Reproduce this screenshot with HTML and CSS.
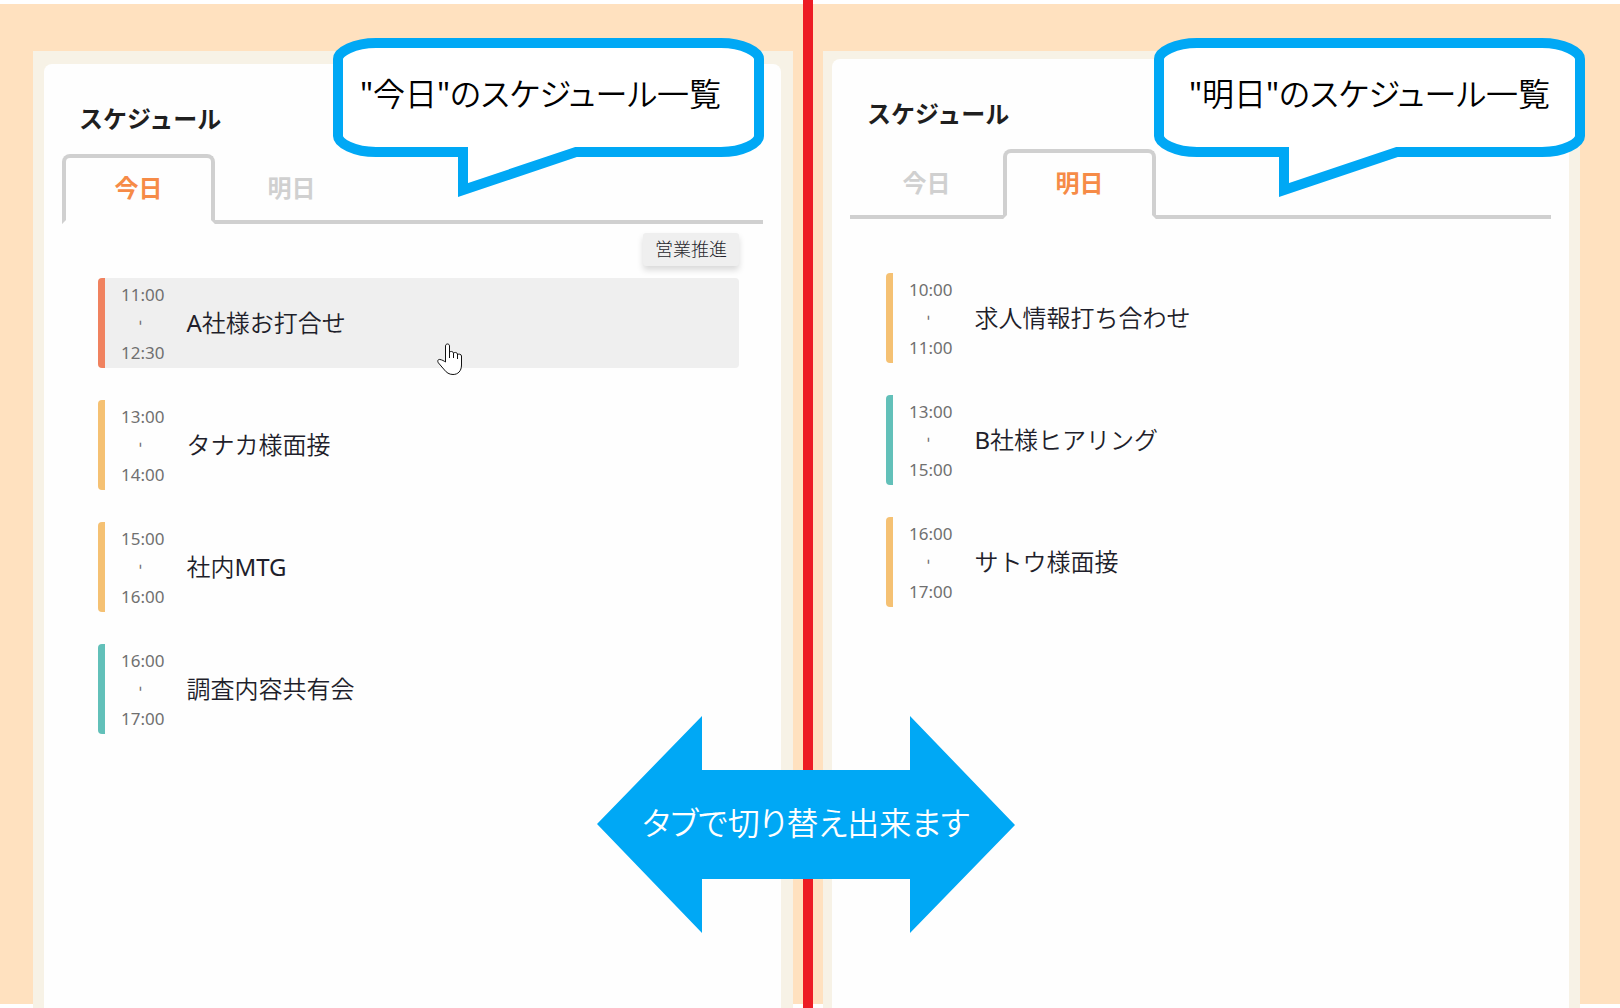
FILE: index.html
```html
<!DOCTYPE html>
<html lang="ja">
<head>
  <meta charset="UTF-8">
  <meta name="viewport" content="width=device-width, initial-scale=1.0">
  <title>スケジュール</title>
  <link rel="stylesheet" href="styles.css">
</head>
<body>
  <main class="page">
    <section class="side side-today">
      <div class="frame">
        <div class="card">
          <h2>スケジュール</h2>
          <div class="tabs" role="tablist">
            <button type="button" class="tab active" role="tab" aria-selected="true">今日</button>
            <button type="button" class="tab" role="tab" aria-selected="false">明日</button>
          </div>
          <ul class="events">
            <li class="event red hover">
              <div class="time"><time>11:00</time><span class="dash">-</span><time>12:30</time></div>
              <p>A社様お打合せ</p>
              <span class="tag">営業推進</span>
              <svg class="cursor" width="26" height="33" viewBox="0 0 26 33" aria-hidden="true">
                <path d="M8.5 19V3C8.500 0.300 12.500 0.300 12.500 3V15V9.500C13 8 16 8 16.500 10V15V10.500C17 9 20 9 20.500 11V16V12C21 10.500 24.500 11 24.500 13V22C24.500 28 21 31.500 16 31.500C12 31.500 9.500 29.500 7.500 27L1.500 20C0 18 1 16 3 16.500C5 16.800 7 18 8.500 19Z"/>
              </svg>
            </li>
            <li class="event yellow">
              <div class="time"><time>13:00</time><span class="dash">-</span><time>14:00</time></div>
              <p>タナカ様面接</p>
            </li>
            <li class="event yellow">
              <div class="time"><time>15:00</time><span class="dash">-</span><time>16:00</time></div>
              <p>社内MTG</p>
            </li>
            <li class="event green">
              <div class="time"><time>16:00</time><span class="dash">-</span><time>17:00</time></div>
              <p>調査内容共有会</p>
            </li>
          </ul>
        </div>
      </div>
      <div class="callout">
        <svg width="431" height="160" viewBox="0 0 431 160" aria-hidden="true">
          <path d="M43 5H388C410 5 426 14 426 21V98C426 105 410 114 388 114H243L130 152V114H43C21 114 5 105 5 98V21C5 14 21 5 43 5Z"/>
        </svg>
        <p>"今日"のスケジュール一覧</p>
      </div>
    </section>

    <div class="divider">
      <div class="arrow">
        <svg width="418" height="217" viewBox="0 0 418 217" aria-hidden="true">
          <path d="M0 108L105 0V54H313V0L418 109L313 217V163H105V217Z"/>
        </svg>
        <p>タブで切り替え出来ます</p>
      </div>
    </div>

    <section class="side side-tomorrow">
      <div class="frame">
        <div class="card">
          <h2>スケジュール</h2>
          <div class="tabs" role="tablist">
            <button type="button" class="tab" role="tab" aria-selected="false">今日</button>
            <button type="button" class="tab active" role="tab" aria-selected="true">明日</button>
          </div>
          <ul class="events">
            <li class="event yellow">
              <div class="time"><time>10:00</time><span class="dash">-</span><time>11:00</time></div>
              <p>求人情報打ち合わせ</p>
            </li>
            <li class="event green">
              <div class="time"><time>13:00</time><span class="dash">-</span><time>15:00</time></div>
              <p>B社様ヒアリング</p>
            </li>
            <li class="event yellow">
              <div class="time"><time>16:00</time><span class="dash">-</span><time>17:00</time></div>
              <p>サトウ様面接</p>
            </li>
          </ul>
        </div>
      </div>
      <div class="callout">
        <svg width="431" height="160" viewBox="0 0 431 160" aria-hidden="true">
          <path d="M43 5H388C410 5 426 14 426 21V98C426 105 410 114 388 114H243L130 152V114H43C21 114 5 105 5 98V21C5 14 21 5 43 5Z"/>
        </svg>
        <p>"明日"のスケジュール一覧</p>
      </div>
    </section>
  </main>
</body>
</html>
```
FILE: styles.css
```css
* { box-sizing: border-box; }
body { margin: 0; background: #fff; color: #1f1f2b; font-family: "Noto Sans", "Noto Sans CJK JP", sans-serif; }
h2, p, ul { margin: 0; padding: 0; }
svg { display: block; }

.page {
  display: grid;
  grid-template-columns: 803fr 10px 807fr;
  min-height: 100vh;
  background: linear-gradient(#ffe1bf, #ffe1bf) no-repeat 0 4px / 100% calc(100% - 8px);
}

/* panels */
.side { position: relative; display: flex; padding-top: 51px; }
.side-today { padding-left: 33px; padding-right: 10px; }
.side-tomorrow { padding-left: 10px; padding-right: 40px; }
.frame { flex: 1; display: flex; background: #f7f2e6; }
.side-today .frame { padding: 13px 12px 0 11px; }
.side-tomorrow .frame { padding: 8px 11px 0 9px; }
.card { flex: 1; padding: 36px 18px 0; background: #fefefe; border-radius: 8px 8px 0 0; }
.card h2 { padding-left: 17px; font-size: 24px; line-height: 38px; font-weight: 700; color: #1f1f1f; }

/* tabs */
.tabs { display: flex; margin-top: 16px; border-bottom: 4px solid #d0d0d0; }
.tab {
  width: 153px;
  height: 70px;
  margin-bottom: -4px;
  padding: 0 0 5px;
  border: 4px solid transparent;
  background: none;
  color: #d0d0d0;
  font-family: inherit;
  font-size: 24px;
  font-weight: 700;
  cursor: pointer;
}
.tab.active { border-color: #d0d0d0 #d0d0d0 #fefefe; border-radius: 8px 8px 0 0; color: #f68b47; }

/* events */
.events { display: flex; flex-direction: column; gap: 32px; padding: 54px 24px 0 36px; list-style: none; }
.event { position: relative; display: flex; align-items: center; height: 90px; border-left: 7px solid; border-radius: 4px; }
.event.hover { background: #efefef; }
.event.red { border-color: #f0825f; }
.event.yellow { border-color: #f5c173; }
.event.green { border-color: #62c0b9; }
.event p { padding: 0 0 3px 22px; font-family: "Noto Sans", "Noto Sans CJK JP DemiLight", "Noto Sans CJK JP", sans-serif; font-size: 24px; }
.time { display: flex; flex-direction: column; align-items: center; padding-left: 16px; color: #707070; font-size: 17px; line-height: 29px; }
.dash { height: 29px; text-align: center; writing-mode: vertical-rl; }

.tag {
  position: absolute;
  right: 0;
  bottom: calc(100% + 12px);
  padding: 0 12px;
  border-radius: 3px;
  background: #efefef;
  box-shadow: 0 4px 6px rgba(0,0,0,0.15);
  font-size: 18px;
  line-height: 33px;
  font-weight: 300;
}
.cursor { position: absolute; left: 332px; top: 65px; fill: #fff; stroke: #111; stroke-width: 1; }

/* notes on top of the panels */
.callout { position: absolute; top: 38px; }
.side-today .callout { right: 39px; }
.side-tomorrow .callout { right: 35px; }
.callout path { fill: #fff; stroke: #00a8f5; stroke-width: 10; }
.callout p, .arrow p {
  position: absolute;
  left: 0;
  right: 0;
  text-align: center;
  white-space: nowrap;
  font-feature-settings: "palt";
  font-family: "Noto Sans", "Noto Sans CJK JP DemiLight", "Noto Sans CJK JP", sans-serif;
  font-size: 32px;
}
.callout p { top: 32px; line-height: 48px; color: #000; }
.side-today .callout p { padding-right: 16px; }
.arrow p { top: 83px; line-height: 48px; color: #fff; }

.divider { position: relative; z-index: 1; background: #ed1c24; }
.arrow { position: absolute; top: 716px; left: 50%; margin-left: -211px; }
.arrow path { fill: #00a8f5; }
```
